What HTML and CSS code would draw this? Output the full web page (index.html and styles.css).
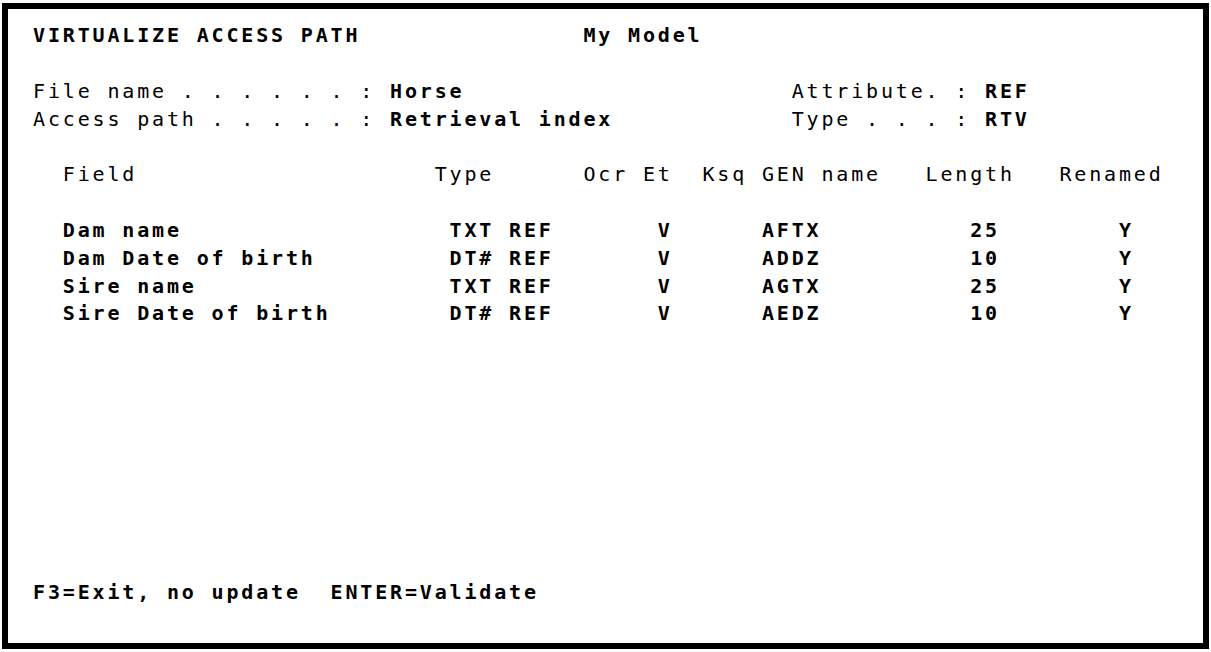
FILE: index.html
```html
<!DOCTYPE html>
<html lang="en">
<head>
<meta charset="utf-8">
<title>Virtualize Access Path</title>
<link rel="stylesheet" href="styles.css">
</head>
<body>
<main class="screen">
  <div class="grid">
    <div class="line"><span class="hi">VIRTUALIZE ACCESS PATH               My Model</span></div>
    <div class="line"></div>
    <div class="line">File name . . . . . . : <span class="hi">Horse</span>                      Attribute. : <span class="hi">REF</span></div>
    <div class="line">Access path . . . . . : <span class="hi">Retrieval index</span>            Type . . . : <span class="hi">RTV</span></div>
    <div class="line"></div>
    <div class="line">  Field                    Type      Ocr Et  Ksq GEN name   Length   Renamed</div>
    <div class="line"></div>
    <div class="line hi">  Dam name                  TXT REF       V      AFTX          25        Y</div>
    <div class="line hi">  Dam Date of birth         DT# REF       V      ADDZ          10        Y</div>
    <div class="line hi">  Sire name                 TXT REF       V      AGTX          25        Y</div>
    <div class="line hi">  Sire Date of birth        DT# REF       V      AEDZ          10        Y</div>
    <div class="line"></div>
    <div class="line"></div>
    <div class="line"></div>
    <div class="line"></div>
    <div class="line"></div>
    <div class="line"></div>
    <div class="line"></div>
    <div class="line"></div>
    <div class="line"></div>
    <div class="line hi">F3=Exit, no update  ENTER=Validate</div>
  </div>
</main>
</body>
</html>
```

FILE: styles.css
```css
html, body {
  margin: 0;
  padding: 0;
  background: #ffffff;
}

.screen {
  box-sizing: border-box;
  width: 1207px;
  height: 646px;
  margin: 3px 0 0 2px;
  border: 6px solid #000000;
  background: #ffffff;
  padding: 13px 0 0 25px;
  overflow: hidden;
}

.grid {
  display: flex;
  flex-direction: column;
  font-family: "DejaVu Sans Mono", "Liberation Mono", monospace;
  font-size: 20px;
  letter-spacing: calc(14.875px - 1ch);
  color: #000000;
}

.line {
  height: 27.85px;
  line-height: 27.85px;
  white-space: pre;
  font-weight: normal;
}

.hi {
  font-weight: bold;
}
```
